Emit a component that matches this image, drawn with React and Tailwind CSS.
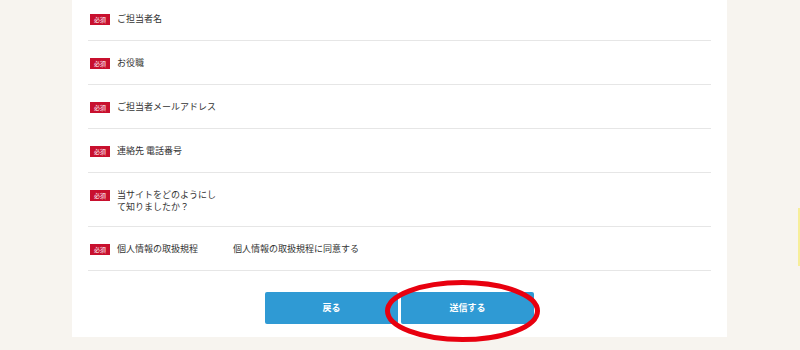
import React from 'react'

const ROWS = [
  { label: 'ご担当者名' },
  { label: 'お役職' },
  { label: 'ご担当者メールアドレス' },
  { label: '連絡先 電話番号' },
  { label: '当サイトをどのようにして知りましたか？', tall: true },
  { label: '個人情報の取扱規程', value: '個人情報の取扱規程に同意する' },
]

function Row({ label, value, tall }) {
  return (
    <div className={`flex items-start border-b border-[#e6e6e6] pt-[16px] ${tall ? 'pb-[13px]' : 'pb-[15px]'}`}>
      <div className="flex items-start w-[145px] pl-[2px] shrink-0">
        <span className="mt-[1px] w-[20px] h-[11px] bg-[#c8102e] text-white text-[6px] leading-[11px] text-center shrink-0">必須</span>
        <span className="ml-[7px] w-[104px] text-[9px] leading-[12px] text-[#333]">{label}</span>
      </div>
      {value && <span className="text-[9px] leading-[12px] text-[#333]">{value}</span>}
    </div>
  )
}

export default function App() {
  return (
    <div className="relative w-[800px] h-[350px] overflow-hidden bg-[#f7f4ef]" style={{ fontFamily: '"Noto Sans CJK JP", "Noto Sans", sans-serif' }}>
      <div className="ml-[72px] w-[655px] -mt-[3px] bg-white px-[16px] pb-[13px]">
        {ROWS.map((r, i) => (
          <Row key={i} {...r} />
        ))}
        <div className="flex justify-center gap-[3px] mt-[21px]">
          <button className="w-[133px] h-[32px] rounded-[2px] bg-[#2f9ad4] text-white text-[9px] font-bold">戻る</button>
          <button className="w-[133px] h-[32px] rounded-[2px] bg-[#2f9ad4] text-white text-[9px] font-bold">送信する</button>
        </div>
      </div>
      <svg className="absolute left-0 top-0 pointer-events-none" width="800" height="350">
        <ellipse cx="462.5" cy="311" rx="75" ry="28.5" fill="none" stroke="#e8000f" strokeWidth="5" />
      </svg>
      <div className="absolute right-0 top-[208px] w-[2px] h-[58px] bg-[#f7ee9a]" />
    </div>
  )
}
